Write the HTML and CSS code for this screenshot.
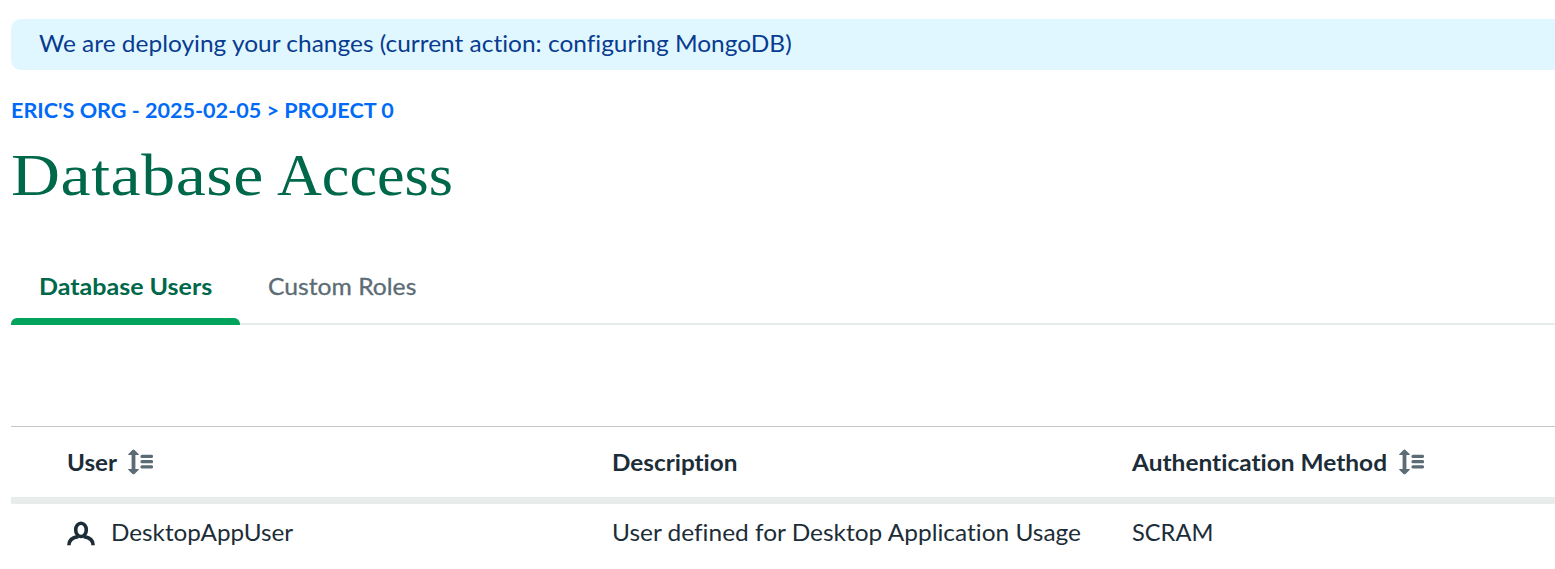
FILE: index.html
```html
<!DOCTYPE html>
<html lang="en">
<head>
<meta charset="utf-8">
<title>Database Access</title>
<link rel="stylesheet" href="styles.css">
</head>
<body>
<svg class="symbols" aria-hidden="true">
  <symbol id="sort" viewBox="0 0 26 26">
    <path d="M6.4 .5Q7 .5 7.5 1L11.8 5.2Q12.2 6 11.3 6H8.4V20H11.3Q12.2 20 11.8 20.8L7.5 25Q6.5 25.7 5.5 25L1.2 20.8Q.8 20 1.7 20H4.6V6H1.7Q.8 6 1.2 5.2L5.4 1Q5.9 .5 6.4 .5Z" fill="currentColor"/>
    <path d="M15 7.4H24.5M15 12.7H24.5M15 17.9H24.5" stroke="currentColor" stroke-width="3.2" stroke-linecap="round"/>
  </symbol>
</svg>
<main class="page">
  <div class="banner"><span class="banner-text">We are deploying your changes (current action: configuring MongoDB)</span></div>
  <nav class="crumbs"><span class="crumbs-text">ERIC'S ORG - 2025-02-05 &gt; PROJECT 0</span></nav>
  <h1 class="title"><span class="title-first">Database</span> <span class="title-last">Access</span></h1>
  <div class="tabs">
    <a class="tab active"><span class="tab-users">Database Users</span></a>
    <a class="tab"><span class="tab-roles">Custom Roles</span></a>
  </div>
  <section class="table">
    <div class="row head">
      <div class="cell"><span class="h-user">User</span><svg class="sort"><use href="#sort"/></svg></div>
      <div class="cell"><span class="h-desc">Description</span></div>
      <div class="cell"><span class="h-auth">Authentication Method</span><svg class="sort"><use href="#sort"/></svg></div>
    </div>
    <div class="row body">
      <div class="cell">
        <svg class="person" viewBox="0 0 28 26" fill="none" stroke="currentColor" stroke-width="3.6">
          <ellipse cx="14" cy="8.9" rx="5.3" ry="6.6"/>
          <path d="M1.9 24.3C1.9 19.4 5.2 16.4 11.2 15.6M26.1 24.3C26.1 19.4 22.8 16.4 16.8 15.6"/>
        </svg>
        <span class="c-user">DesktopAppUser</span>
      </div>
      <div class="cell"><span class="c-desc">User defined for Desktop Application Usage</span></div>
      <div class="cell"><span class="c-auth">SCRAM</span></div>
    </div>
  </section>
</main>
</body>
</html>
```
FILE: styles.css
```css
* { box-sizing: border-box; }
body { margin: 0; background: #fff; color: #1c2d38; font: 22.5px/28px Lato, sans-serif; font-variant-ligatures: none; white-space: nowrap; overflow: hidden; }
.symbols { display: none; }
.page { padding: 19px 0 0 11px; }
.page span { display: inline-block; transform: scaleX(var(--stretch, 1.087)); transform-origin: left center; }
.banner { height: 51px; padding: 11px 28px; background: #e1f7ff; color: #083c90; border-radius: 10px 0 0 10px; }
.crumbs { height: 28px; margin-top: 26px; color: #016bf8; font-size: 21px; font-weight: 700; --stretch: 1.028; }
.title { display: flex; height: 72px; margin: 15px 0 0; color: #00684a; font: 400 60px/72px "Liberation Serif", serif; }
.title-first { width: 266px; letter-spacing: .5px; --stretch: 1.13; }
.title-last { --stretch: 1.035; }
.tabs { display: flex; height: 74px; margin-top: 40px; border-bottom: 2px solid #e8edeb; }
.tab { height: 74px; padding: 22px 28px; color: #5c6c75; }
.tab-users { --stretch: 1.112; }
.tab-roles { --stretch: 1.097; -webkit-text-stroke: .3px; }
.tab.active { position: relative; width: 229px; color: #00684a; font-weight: 700; }
.tab.active::after { content: ""; position: absolute; left: 0; right: 0; bottom: 0; height: 7px; background: #00a35c; border-radius: 6px 6px 0 0; }
.table { margin-top: 101px; border-top: 1px solid #c1c7c6; }
.row { display: grid; grid-template-columns: 545px 520px 1fr; padding-left: 56px; }
.cell { display: flex; align-items: center; }
.head { height: 77px; border-bottom: 7px solid #e8edeb; font-weight: 700; padding-top: 2px; }
.h-user { width: 50px; --stretch: 1.075; }
.h-desc { --stretch: 1.08; }
.h-auth { width: 256px; --stretch: 1.087; }
.body { height: 60px; }
.sort { width: 26px; height: 26px; margin-left: 10px; margin-top: -3px; color: #5c6c75; }
.person { width: 28px; height: 26px; margin-right: 16px; }
.body span { margin-top: -2px; }
.c-user { --stretch: 1.078; }
.c-auth { --stretch: 1.05; }
```
